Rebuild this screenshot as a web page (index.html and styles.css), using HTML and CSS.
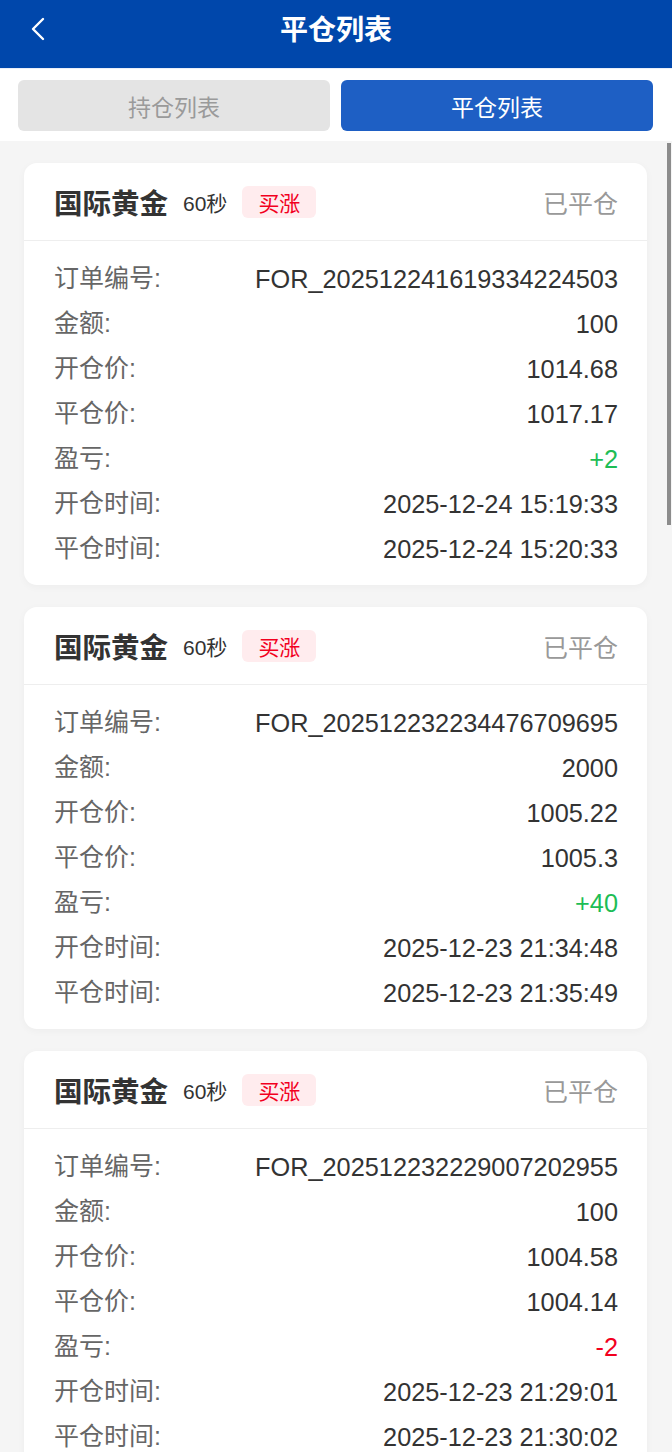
FILE: index.html
```html
<!DOCTYPE html>
<html lang="zh-CN">
<head>
<meta charset="utf-8">
<title>平仓列表</title>
<link rel="stylesheet" href="styles.css">
</head>
<body>
<div class="page">
  <header class="topbar">
    <svg class="back" width="24" height="28" viewBox="0 0 24 28"><path d="M14 4 L4 14 L14 24" fill="none" stroke="#fff" stroke-width="2.4" stroke-linecap="round" stroke-linejoin="round"/></svg>
    <h1 class="title">平仓列表</h1>
  </header>
  <nav class="tabs">
    <div class="tab">持仓列表</div>
    <div class="tab active">平仓列表</div>
  </nav>
  <main class="list">
    <section class="card">
      <div class="card-head">
        <span class="name">国际黄金</span>
        <span class="period">60秒</span>
        <span class="badge">买涨</span>
        <span class="status">已平仓</span>
      </div>
      <div class="card-body">
        <div class="row"><span class="label">订单编号:</span><span class="value">FOR_202512241619334224503</span></div>
        <div class="row"><span class="label">金额:</span><span class="value">100</span></div>
        <div class="row"><span class="label">开仓价:</span><span class="value">1014.68</span></div>
        <div class="row"><span class="label">平仓价:</span><span class="value">1017.17</span></div>
        <div class="row"><span class="label">盈亏:</span><span class="value up">+2</span></div>
        <div class="row"><span class="label">开仓时间:</span><span class="value">2025-12-24 15:19:33</span></div>
        <div class="row"><span class="label">平仓时间:</span><span class="value">2025-12-24 15:20:33</span></div>
      </div>
    </section>
    <section class="card">
      <div class="card-head">
        <span class="name">国际黄金</span>
        <span class="period">60秒</span>
        <span class="badge">买涨</span>
        <span class="status">已平仓</span>
      </div>
      <div class="card-body">
        <div class="row"><span class="label">订单编号:</span><span class="value">FOR_202512232234476709695</span></div>
        <div class="row"><span class="label">金额:</span><span class="value">2000</span></div>
        <div class="row"><span class="label">开仓价:</span><span class="value">1005.22</span></div>
        <div class="row"><span class="label">平仓价:</span><span class="value">1005.3</span></div>
        <div class="row"><span class="label">盈亏:</span><span class="value up">+40</span></div>
        <div class="row"><span class="label">开仓时间:</span><span class="value">2025-12-23 21:34:48</span></div>
        <div class="row"><span class="label">平仓时间:</span><span class="value">2025-12-23 21:35:49</span></div>
      </div>
    </section>
    <section class="card">
      <div class="card-head">
        <span class="name">国际黄金</span>
        <span class="period">60秒</span>
        <span class="badge">买涨</span>
        <span class="status">已平仓</span>
      </div>
      <div class="card-body">
        <div class="row"><span class="label">订单编号:</span><span class="value">FOR_202512232229007202955</span></div>
        <div class="row"><span class="label">金额:</span><span class="value">100</span></div>
        <div class="row"><span class="label">开仓价:</span><span class="value">1004.58</span></div>
        <div class="row"><span class="label">平仓价:</span><span class="value">1004.14</span></div>
        <div class="row"><span class="label">盈亏:</span><span class="value down">-2</span></div>
        <div class="row"><span class="label">开仓时间:</span><span class="value">2025-12-23 21:29:01</span></div>
        <div class="row"><span class="label">平仓时间:</span><span class="value">2025-12-23 21:30:02</span></div>
      </div>
    </section>
  </main>
  <div class="scroll-thumb"></div>
</div>
</body>
</html>
```

FILE: styles.css
```css
* { box-sizing: border-box; }
html, body {
  margin: 0;
  padding: 0;
  background: #f5f5f5;
  font-family: "Liberation Sans", "Noto Sans CJK SC", sans-serif;
}
.page {
  position: relative;
  width: 672px;
  min-height: 1452px;
  overflow: hidden;
  background: #f5f5f5;
}
.topbar {
  position: relative;
  height: 69px;
  background: #0047ab;
  display: flex;
  align-items: center;
  justify-content: center;
  border-bottom: 1px solid #e9eef8;
}
.back {
  position: absolute;
  left: 29px;
  top: 15px;
}
.title {
  margin: 0;
  color: #fff;
  font-size: 28px;
  font-weight: bold;
  line-height: 1;
  margin-top: -6px;
}
.tabs {
  background: #fff;
  display: flex;
  gap: 11px;
  padding: 11px 19px 10px 18px;
}
.tab {
  flex: 1;
  height: 51px;
  border-radius: 6px;
  background: #e4e4e4;
  color: #9a9a9a;
  font-size: 23px;
  display: flex;
  align-items: center;
  justify-content: center;
}
.tab.active {
  background: #1e5fc4;
  color: #fff;
}
.list {
  display: flex;
  flex-direction: column;
  gap: 22px;
  padding: 22px 25px 22px 24px;
}
.card {
  background: #fff;
  border-radius: 13px;
  box-shadow: 0 2px 8px rgba(0, 0, 0, 0.035);
}
.card-head {
  height: 78px;
  display: flex;
  align-items: center;
  padding: 0 29px 0 30px;
  border-bottom: 1px solid #eeeeee;
}
.name {
  font-size: 28.5px;
  font-weight: bold;
  color: #333;
}
.period {
  margin-left: 15px;
  font-size: 21px;
  color: #333;
}
.badge {
  margin-left: 15px;
  height: 32px;
  padding: 0 16px;
  border-radius: 6px;
  background: #ffecee;
  color: #f2001e;
  font-size: 21px;
  display: flex;
  align-items: center;
}
.status {
  margin-left: auto;
  font-size: 25px;
  color: #999;
}
.card-body {
  padding: 16px 29px 13px 30px;
}
.row {
  height: 45px;
  display: flex;
  align-items: center;
  justify-content: space-between;
  font-size: 25px;
}
.label { color: #666; line-height: 1; padding-bottom: 2px; }
.value { color: #333; font-size: 25.3px; }
.value.up { color: #1dbd55; }
.value.down { color: #f2001e; }
.scroll-thumb {
  position: absolute;
  right: 1px;
  top: 143px;
  width: 4px;
  height: 382px;
  background: #8c8c8c;
}
```
